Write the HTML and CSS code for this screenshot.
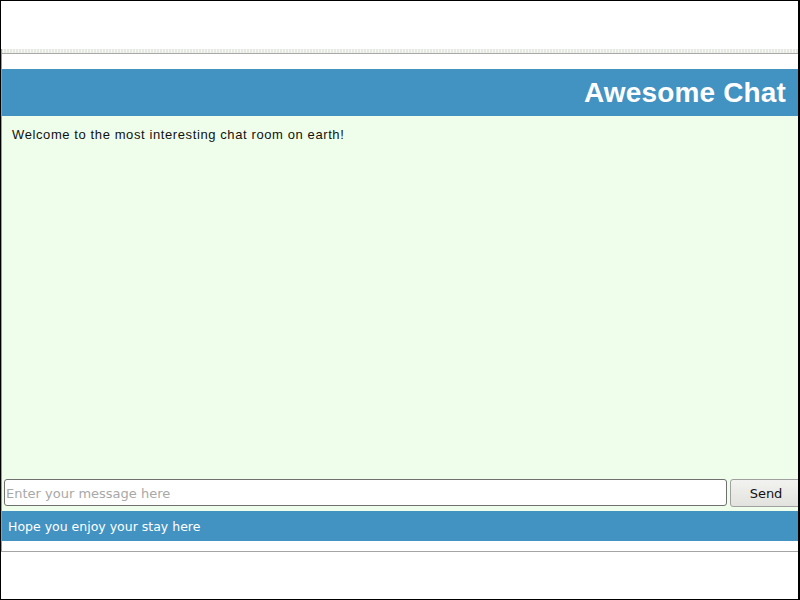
FILE: index.html
```html
<!DOCTYPE html>
<html>
<head>
<meta charset="utf-8">
<title>Awesome Chat</title>
<link rel="stylesheet" href="styles.css">
</head>
<body>
<div class="frame">
  <div class="top-space"></div>
  <div class="window">
    <div class="band"></div>
    <div class="inner">
      <header class="header"><h1 class="title">Awesome Chat</h1></header>
      <section class="chat">
        <div class="messages">Welcome to the most interesting chat room on earth!</div>
        <form class="input-row">
          <input class="msg-input" type="text" placeholder="Enter your message here">
          <button class="send" type="button">Send</button>
        </form>
      </section>
      <footer class="footer">Hope you enjoy your stay here</footer>
    </div>
  </div>
</div>
</body>
</html>
```

FILE: styles.css
```css
html, body {
  margin: 0;
  padding: 0;
  background: #fff;
}
.frame {
  width: 800px;
  height: 600px;
  box-sizing: border-box;
  border: 1px solid #000;
  border-right-width: 2px;
  overflow: hidden;
  background: #fff;
}
.top-space {
  height: 48px;
}
.window {
  border-left: 1px solid #9c9c9c;
  border-bottom: 1px solid #a4a4a4;
  overflow: hidden;
}
.band {
  height: 4px;
  border-bottom: 1px solid #a8a8a8;
  background-color: #e6e8e2;
  background-image: radial-gradient(circle, #f6f6f4 0.6px, transparent 0.9px);
  background-size: 3px 2px;
}
.inner {
  padding: 15px 0 10px 0;
}
.header {
  height: 47px;
  background: #4292c2;
  display: flex;
  align-items: center;
  justify-content: flex-end;
  padding-right: 12px;
}
.title {
  margin: 0;
  font-family: "Liberation Sans", Arial, sans-serif;
  font-weight: bold;
  font-size: 28px;
  letter-spacing: 0.15px;
  color: #fff;
  line-height: 1;
  padding-top: 1px;
}
.chat {
  height: 395px;
  background: #effeea;
  display: flex;
  flex-direction: column;
}
.messages {
  flex: 1;
  padding: 11px 10px;
  font-family: "Liberation Sans", Arial, sans-serif;
  font-size: 13px;
  letter-spacing: 0.6px;
  color: #111;
}
.input-row {
  margin: 0;
  display: flex;
  gap: 3px;
  padding: 0 0 4px 2px;
}
.msg-input {
  width: 723px;
  height: 27px;
  box-sizing: border-box;
  flex: none;
  border: 1px solid #707070;
  border-radius: 3px;
  padding: 2px 1px 0 1px;
  font-family: "DejaVu Sans", sans-serif;
  font-size: 13px;
  background: #fff;
  color: #222;
  outline: none;
}
.msg-input::placeholder {
  color: #a8a8a8;
}
.send {
  width: 72px;
  height: 28px;
  flex: none;
  box-sizing: border-box;
  border: 1px solid #a0a0a0;
  border-radius: 3px;
  background: linear-gradient(#f2f2f0, #e2e2de);
  font-family: "DejaVu Sans", sans-serif;
  font-size: 13px;
  color: #111;
  padding: 0;
}
.footer {
  height: 30px;
  box-sizing: border-box;
  background: #4292c2;
  color: #fff;
  font-family: "DejaVu Sans", sans-serif;
  font-size: 12.5px;
  line-height: 30px;
  padding-left: 6px;
  padding-top: 1px;
}
```
